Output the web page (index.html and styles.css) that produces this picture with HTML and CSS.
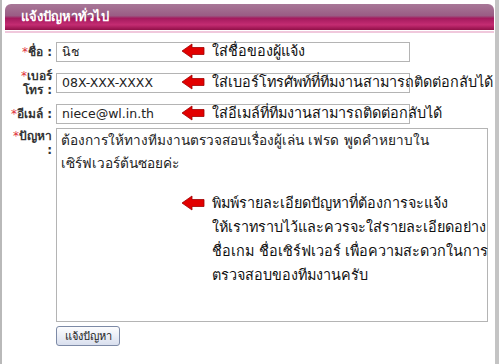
FILE: index.html
```html
<!DOCTYPE html>
<html>
<head>
<meta charset="utf-8">
<link rel="stylesheet" href="styles.css">
</head>
<body>
<div class="frame">
  <div class="panel">
    <div class="header">แจ้งปัญหาทั่วไป</div>
    <div class="underline"></div>
    <form class="form">
      <div class="row">
        <label class="label"><span class="req">*</span>ชื่อ :</label>
        <div class="field">
          <div class="input">นิช</div>
          <div class="note"><svg class="arrow" viewBox="0 0 24 16"><path d="M1 8 L11 1 L11 4.5 L23 4.5 L23 11.5 L11 11.5 L11 15 Z" fill="#e20000" stroke="#a00000" stroke-width="0.8" stroke-linejoin="round"/></svg><span>ใส่ชื่อของผู้แจ้ง</span></div>
        </div>
      </div>
      <div class="row">
        <label class="label two"><span class="req">*</span>เบอร์<br>โทร :</label>
        <div class="field">
          <div class="input">08X-XXX-XXXX</div>
          <div class="note"><svg class="arrow" viewBox="0 0 24 16"><path d="M1 8 L11 1 L11 4.5 L23 4.5 L23 11.5 L11 11.5 L11 15 Z" fill="#e20000" stroke="#a00000" stroke-width="0.8" stroke-linejoin="round"/></svg><span>ใส่เบอร์โทรศัพท์ที่ทีมงานสามารถติดต่อกลับได้</span></div>
        </div>
      </div>
      <div class="row">
        <label class="label"><span class="req">*</span>อีเมล์ :</label>
        <div class="field">
          <div class="input">niece@wl.in.th</div>
          <div class="note"><svg class="arrow" viewBox="0 0 24 16"><path d="M1 8 L11 1 L11 4.5 L23 4.5 L23 11.5 L11 11.5 L11 15 Z" fill="#e20000" stroke="#a00000" stroke-width="0.8" stroke-linejoin="round"/></svg><span>ใส่อีเมล์ที่ทีมงานสามารถติดต่อกลับได้</span></div>
        </div>
      </div>
      <div class="row area-row">
        <label class="label two"><span class="req">*</span>ปัญหา<br>:</label>
        <div class="field">
          <div class="textarea">ต้องการให้ทางทีมงานตรวจสอบเรื่องผู้เล่น เฟรด พูดคำหยาบใน<br>เซิร์ฟเวอร์ต้นซอยค่ะ</div>
          <div class="note note-area"><svg class="arrow" viewBox="0 0 24 16"><path d="M1 8 L11 1 L11 4.5 L23 4.5 L23 11.5 L11 11.5 L11 15 Z" fill="#e20000" stroke="#a00000" stroke-width="0.8" stroke-linejoin="round"/></svg><span>พิมพ์รายละเอียดปัญหาที่ต้องการจะแจ้ง<br>ให้เราทราบไว้และควรจะใส่รายละเอียดอย่าง<br>ชื่อเกม ชื่อเซิร์ฟเวอร์ เพื่อความสะดวกในการ<br>ตรวจสอบของทีมงานครับ</span></div>
        </div>
      </div>
      <div class="row btn-row">
        <span class="label"></span>
        <button type="button" class="btn">แจ้งปัญหา</button>
      </div>
    </form>
  </div>
</div>
</body>
</html>
```
FILE: styles.css
```css
html, body {
  margin: 0;
  padding: 0;
  background: #fff;
}
body {
  width: 499px;
  height: 364px;
  overflow: hidden;
  font-family: Tahoma, "DejaVu Sans", "Noto Sans", sans-serif;
}
.frame {
  box-sizing: border-box;
  height: 364px;
  border-left: 2px solid #b9b9b9;
  border-right: 4px solid #c4c4c4;
  padding: 4px 1px 0 3px;
}
.header {
  height: 26px;
  border-radius: 6px 6px 0 0;
  background: linear-gradient(to bottom, #a87898 0%, #9a5c84 45%, #a41a5e 55%, #c42c72 80%, #901048 100%);
  color: #fff;
  font-weight: bold;
  font-size: 13px;
  line-height: 26px;
  padding-left: 16px;
}
.underline {
  height: 2px;
  margin-top: 1px;
  background: #f0c8dc;
}
.form {
  display: flex;
  flex-direction: column;
  gap: 7px;
  margin-top: 9px;
}
.row {
  display: flex;
  align-items: center;
  gap: 4px;
}
.form .area-row {
  margin-top: -3px;
  align-items: flex-start;
}
.form .btn-row {
  margin-top: -3px;
}
.label {
  width: 47px;
  flex: none;
  text-align: right;
  font-size: 12px;
  font-weight: bold;
  color: #333;
  line-height: 14px;
}
.req {
  color: #e0303a;
  font-weight: normal;
}
.field {
  position: relative;
  flex: none;
}
.input {
  box-sizing: border-box;
  width: 354px;
  height: 20px;
  border: 1px solid #b4b4b4;
  font-size: 12.5px;
  line-height: 18px;
  padding-left: 5px;
  color: #222;
}
.area-row .label {
  padding-top: 1px;
}
.textarea {
  box-sizing: border-box;
  width: 432px;
  height: 194px;
  border: 1px solid #b4b4b4;
  font-size: 13.6px;
  line-height: 23px;
  padding: 0 4px;
  color: #222;
}
.note {
  position: absolute;
  left: 125px;
  top: -3px;
  display: flex;
  align-items: center;
  gap: 7px;
  white-space: nowrap;
  font-size: 14.4px;
  color: #111;
  line-height: 24px;
}
.note-area {
  top: 63px;
  align-items: flex-start;
}
.note-area .arrow {
  margin-top: 4px;
}
.arrow {
  width: 24px;
  height: 16px;
  flex: none;
  display: block;
}
.btn {
  font-family: inherit;
  font-size: 11px;
  height: 20px;
  width: 64px;
  padding: 0;
  border: 1px solid #7d8aa6;
  border-radius: 3px;
  background: linear-gradient(#fdfdfe, #d9dfee);
  color: #222;
}
```
